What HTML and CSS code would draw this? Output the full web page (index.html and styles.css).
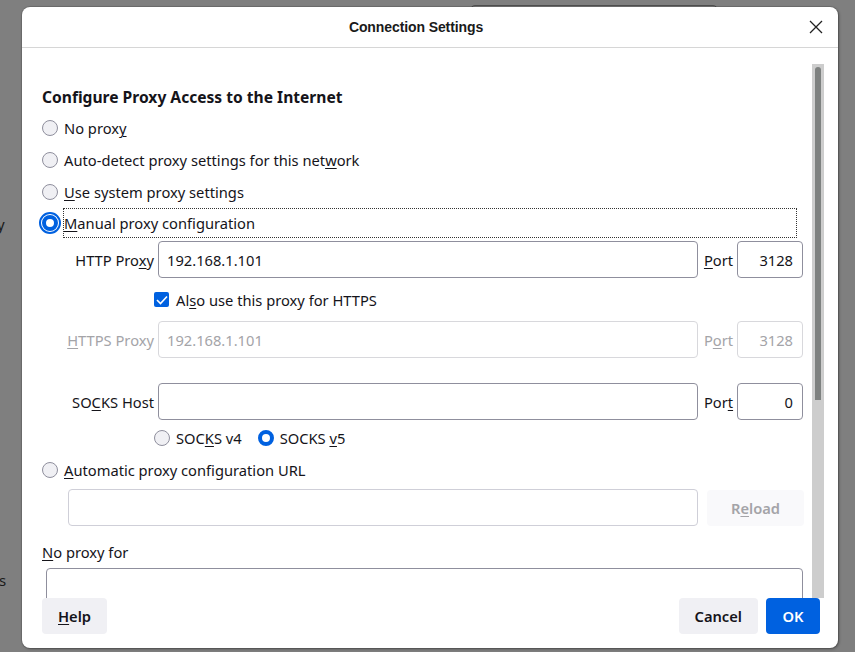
FILE: index.html
```html
<!DOCTYPE html>
<html>
<head>
<meta charset="utf-8">
<link rel="stylesheet" href="styles.css">
</head>
<body>
<div class="bg-page">
  <div class="bg-box"></div>
  <span class="bg-frag bg-frag-y">y</span>
  <span class="bg-frag bg-frag-s">s</span>
</div>
<div class="dialog">
  <div class="titlebar">
    <span class="title">Connection Settings</span>
    <svg class="close" width="14" height="14" viewBox="0 0 14 14"><path d="M1 1 L13 13 M13 1 L1 13" stroke="#222" stroke-width="1.3" fill="none"/></svg>
  </div>
  <div class="body">
    <div class="content">
      <h1 class="heading">Configure Proxy Access to the Internet</h1>
      <div class="radio-row"><span class="radio"></span><span>No prox<u>y</u></span></div>
      <div class="radio-row"><span class="radio"></span><span>Auto-detect proxy settings for this net<u>w</u>ork</span></div>
      <div class="radio-row short"><span class="radio"></span><span><u>U</u>se system proxy settings</span></div>
      <div class="radio-row"><span class="radio checked focused"></span><span class="focus-label"><u>M</u>anual proxy configuration</span></div>

      <div class="proxy-row first">
        <span class="lbl">HTTP Pro<u>x</u>y</span>
        <div class="field">192.168.1.101</div>
        <span class="port-lbl"><u>P</u>ort</span>
        <div class="field port">3128</div>
      </div>
      <div class="check-row"><span class="checkbox"><svg width="12" height="10" viewBox="0 0 12 10"><path d="M1 5 L4.5 8.5 L11 1.5" stroke="#fff" stroke-width="1.6" fill="none"/></svg></span><span>Al<u>s</u>o use this proxy for HTTPS</span></div>
      <div class="proxy-row disabled">
        <span class="lbl"><u>H</u>TTPS Proxy</span>
        <div class="field">192.168.1.101</div>
        <span class="port-lbl">P<u>o</u>rt</span>
        <div class="field port">3128</div>
      </div>
      <div class="proxy-row socks">
        <span class="lbl">SO<u>C</u>KS Host</span>
        <div class="field"></div>
        <span class="port-lbl">Por<u>t</u></span>
        <div class="field port">0</div>
      </div>
      <div class="socks-ver">
        <span class="radio"></span><span>SOC<u>K</u>S v4</span>
        <span class="radio checked v5"></span><span>SOCKS <u>v</u>5</span>
      </div>
      <div class="radio-row auto"><span class="radio"></span><span><u>A</u>utomatic proxy configuration URL</span></div>
      <div class="url-row">
        <div class="field url"></div>
        <div class="reload">R<u>e</u>load</div>
      </div>
      <div class="noproxy-lbl"><u>N</u>o proxy for</div>
      <div class="textarea"></div>
    </div>
    <div class="scrollbar"><div class="thumb"></div></div>
  </div>
  <div class="footer">
    <button class="btn"><u>H</u>elp</button>
    <span class="spacer"></span>
    <button class="btn">Cancel</button>
    <button class="btn primary">OK</button>
  </div>
</div>
</body>
</html>
```
FILE: styles.css
```css
html, body {
  margin: 0;
  padding: 0;
}
body {
  width: 855px;
  height: 652px;
  overflow: hidden;
  background: #7f7f7f;
  font-family: "Noto Sans", "Open Sans", sans-serif;
  font-size: 14.7px;
  color: #15141a;
  position: relative;
}
u {
  text-decoration-thickness: 1px;
  text-underline-offset: 2px;
}
.bg-page {
  position: absolute;
  inset: 0;
}
.bg-box {
  position: absolute;
  left: 470px;
  top: 5px;
  width: 246px;
  height: 30px;
  border: 1px solid #4e4e4e;
  border-radius: 5px;
}
.bg-frag {
  position: absolute;
  color: #1a1a1a;
  font-size: 15px;
}
.bg-frag-y { left: -3px; top: 214px; }
.bg-frag-s { left: -1px; top: 570px; }

.dialog {
  position: absolute;
  left: 22px;
  top: 7px;
  width: 816px;
  height: 641px;
  background: #fff;
  border-radius: 8px;
  box-shadow: 0 0 0 1px rgba(0,0,0,0.12), 1px 1px 3px rgba(0,0,0,0.35);
  display: flex;
  flex-direction: column;
  overflow: hidden;
}
.titlebar {
  height: 40px;
  flex: none;
  border-bottom: 1px solid #d6d6d6;
  display: flex;
  align-items: center;
  justify-content: center;
  padding-right: 28px;
  position: relative;
}
.title {
  font-family: "Liberation Sans", sans-serif;
  font-weight: bold;
  font-size: 14px;
  letter-spacing: -0.1px;
  color: #1a1a1a;
}
.close {
  position: absolute;
  right: 15px;
  top: 13px;
}
.body {
  flex: none;
  height: 550px;
  display: flex;
  overflow: hidden;
}
.content {
  flex: 1;
  padding: 38px 0 0 20px;
  overflow: hidden;
}
.heading {
  margin: 0 0 4px;
  font-size: 15.6px;
  font-weight: bold;
  line-height: 22px;
  height: 22px;
}
.radio-row {
  display: flex;
  align-items: center;
  gap: 6px;
  height: 32px;
}
.radio-row.short { height: 31px; }
.radio {
  width: 14px;
  height: 14px;
  border: 1px solid #8f8f9d;
  border-radius: 50%;
  background: #f0f0f4;
  flex: none;
}
.radio.checked {
  background: #fff;
  border: 4px solid #0061e0;
  width: 8px;
  height: 8px;
}
.radio.focused {
  outline: 2px solid #0061e0;
  outline-offset: 1px;
}
.focus-label {
  flex: 1;
  margin-left: -1px;
  margin-right: 15px;
  height: 30px;
  line-height: 28px;
  border: 1px dotted #333;
  box-sizing: border-box;
}
.proxy-row {
  display: grid;
  grid-template-columns: 96px 540px 39px 66px;
  grid-template-rows: 37px;
  align-items: center;
  height: 37px;
  margin-left: 20px;
  white-space: nowrap;
}
.proxy-row.first { margin-top: 2px; }
.proxy-row .lbl {
  text-align: right;
  padding-right: 4px;
}
.field {
  height: 35px;
  border: 1px solid #8f8f9d;
  border-radius: 4px;
  display: flex;
  align-items: center;
  padding: 0 8px;
  white-space: nowrap;
}
.port-lbl {
  text-align: center;
  padding-left: 2px;
}
.field.port {
  justify-content: flex-end;
  padding: 0 9px 0 0;
}
.proxy-row.disabled { color: #a4a4a8; }
.proxy-row.disabled .field {
  border-color: #d8d8dc;
  color: #a4a4a8;
}
.proxy-row.socks { margin-top: 25px; }

.check-row {
  display: flex;
  align-items: center;
  gap: 7px;
  height: 43px;
  margin-left: 112px;
}
.checkbox {
  width: 15px;
  height: 15px;
  border-radius: 2px;
  background: #0061e0;
  display: flex;
  align-items: center;
  justify-content: center;
}
.socks-ver {
  display: flex;
  align-items: center;
  height: 36px;
  margin-left: 112px;
  gap: 6px;
}
.socks-ver .v5 { margin-left: 10px; }
.radio-row.auto { height: 28px; }
.url-row {
  display: flex;
  align-items: center;
  margin: 5px 0 0 26px;
  gap: 9px;
}
.field.url {
  width: 612px;
  border-color: #cfcfd8;
}
.reload {
  width: 97px;
  height: 36px;
  border-radius: 4px;
  background: #f9f9fb;
  color: #a4a4a8;
  font-weight: 600;
  display: flex;
  align-items: center;
  justify-content: center;
}
.noproxy-lbl {
  height: 22px;
  line-height: 22px;
  margin-top: 15px;
}
.textarea {
  margin: 5px 0 0 4px;
  width: 755px;
  height: 60px;
  border: 1px solid #8f8f9d;
  border-radius: 4px;
}
.scrollbar {
  width: 12px;
  flex: none;
  margin: 16px 14px 0 0;
  background: #cdcdcd;
  display: flex;
  justify-content: center;
}
.thumb {
  width: 6px;
  height: 333px;
  margin-top: 3px;
  background: #7e8180;
  border-radius: 3px 3px 0 0;
}
.footer {
  flex: none;
  display: flex;
  align-items: flex-start;
  gap: 8px;
  padding: 0 18px 0 20px;
}
.spacer { flex: 1; }
.btn {
  height: 36px;
  border: none;
  border-radius: 4px;
  background: #f0f0f4;
  font-family: "Noto Sans", "Open Sans", sans-serif;
  font-size: 14.7px;
  font-weight: 600;
  color: #15141a;
  padding: 0 16px;
}
.btn.primary {
  background: #0061e0;
  color: #fff;
  width: 54px;
  padding: 0;
}
```
